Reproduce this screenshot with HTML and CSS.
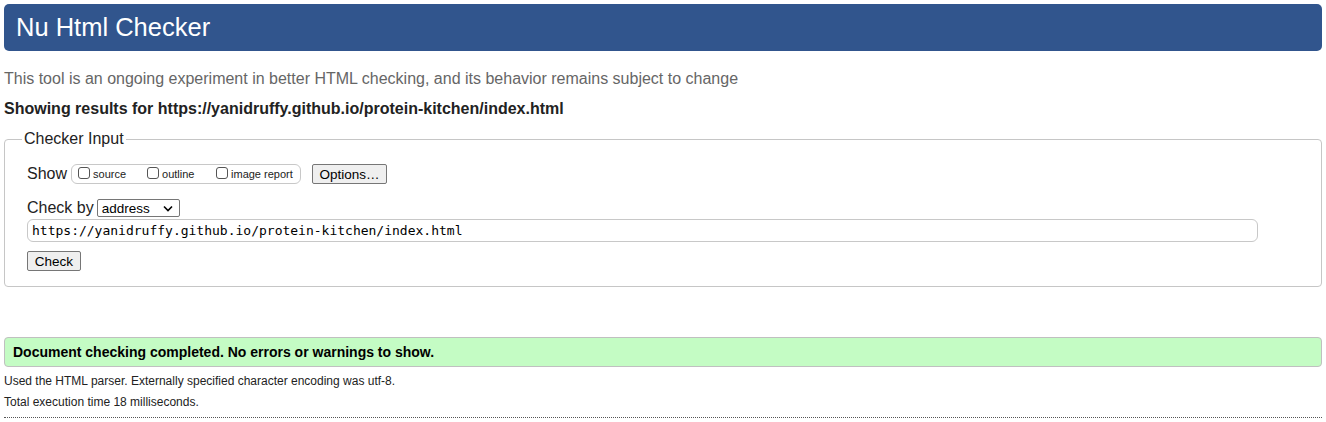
FILE: index.html
```html
<!DOCTYPE html>
<html>
<head>
<meta charset="utf-8">
<title>Nu Html Checker</title>
<link rel="stylesheet" href="styles.css">
</head>
<body>
<h1 class="title">Nu Html Checker</h1>
<p class="intro">This tool is an ongoing experiment in better HTML checking, and its behavior remains subject to change</p>
<p class="showing">Showing results for https://yanidruffy.github.io/protein-kitchen/index.html</p>
<fieldset class="inputs">
  <legend class="legend">Checker Input</legend>
  <div class="row show-row">
    <span class="lbl">Show</span>
    <span class="opts">
      <label class="opt opt-source"><span class="cb"></span>source</label>
      <label class="opt opt-outline"><span class="cb"></span>outline</label>
      <label class="opt"><span class="cb"></span>image report</label>
    </span>
    <span class="btn btn-options">Options…</span>
  </div>
  <div class="row by-row">
    <span class="lbl">Check by</span>
    <span class="select">address<svg class="chev" width="10" height="7" viewBox="0 0 10 7"><path d="M1 1.5 L5 5.5 L9 1.5" fill="none" stroke="#000" stroke-width="1.6"/></svg></span>
  </div>
  <div class="url">https://yanidruffy.github.io/protein-kitchen/index.html</div>
  <div class="row check-row"><span class="btn btn-check">Check</span></div>
</fieldset>
<div class="success">Document checking completed. No errors or warnings to show.</div>
<p class="meta meta-first">Used the HTML parser. Externally specified character encoding was utf-8.</p>
<p class="meta">Total execution time 18 milliseconds.</p>
<div class="rule"></div>
</body>
</html>
```
FILE: styles.css
```css
html, body {
  margin: 0;
  background: #fff;
}
body {
  padding: 4px;
  font-family: "Liberation Sans", Arial, sans-serif;
  color: #000;
}
.title {
  margin: 0;
  height: 47px;
  box-sizing: border-box;
  background: #31558d;
  color: #fff;
  border-radius: 5px;
  font-weight: normal;
  font-size: 25.5px;
  line-height: 47px;
  padding-left: 12px;
}
.intro {
  margin: 18px 0 0 0;
  font-size: 16px;
  line-height: 20px;
  color: #666;
}
.showing {
  margin: 10px 0 0 0;
  font-size: 16px;
  line-height: 20px;
  font-weight: bold;
  color: #222;
}
.inputs {
  margin: 11px 0 0 0;
  border: 1px solid #c6c6c6;
  border-radius: 4px;
  padding: 14px 22px 15px 22px;
  min-width: 0;
}
.legend {
  font-size: 16px;
  padding: 0 2px;
  margin-left: -5px;
  line-height: 18px;
  color: #222;
}
.row {
  display: flex;
  align-items: center;
}
.lbl {
  font-size: 16px;
  color: #222;
}
.show-row {
  height: 22px;
  margin-top: 1px;
}
.opts {
  display: flex;
  align-items: center;
  margin-left: 4px;
  height: 20px;
  box-sizing: border-box;
  border: 1px solid #c8c8c8;
  border-radius: 6px;
  padding: 0 6px 0 6px;
  width: 230px;
  font-size: 11px;
}
.opt {
  display: flex;
  align-items: center;
  color: #222;
}
.opt-source { width: 69px; }
.opt-outline { width: 69px; }
.cb {
  width: 12px;
  height: 12px;
  box-sizing: border-box;
  border: 1px solid #555;
  border-radius: 3px;
  margin-right: 3px;
  margin-top: -3px;
}
.btn {
  display: inline-flex;
  align-items: center;
  justify-content: center;
  box-sizing: border-box;
  border: 1px solid #767676;
  border-radius: 2px;
  background: #efefef;
  font-size: 13.5px;
  color: #000;
}
.btn-options {
  margin-left: 11px;
  width: 75px;
  height: 20px;
}
.by-row {
  margin-top: 13px;
  height: 20px;
}
.select {
  margin-left: 3px;
  width: 83px;
  height: 18px;
  box-sizing: border-box;
  border: 1px solid #767676;
  border-radius: 2px;
  font-size: 13.5px;
  display: flex;
  align-items: center;
  justify-content: space-between;
  padding: 0 6px 0 4px;
}
.url {
  margin-top: 1px;
  height: 23px;
  width: 1231px;
  box-sizing: border-box;
  border: 1px solid #c8c8c8;
  border-radius: 6px;
  font-family: "DejaVu Sans Mono", "Liberation Mono", monospace;
  font-size: 13px;
  line-height: 21px;
  padding-left: 4px;
  color: #000;
}
.check-row {
  margin-top: 9px;
}
.btn-check {
  width: 54px;
  height: 20px;
}
.success {
  margin-top: 50px;
  height: 30px;
  box-sizing: border-box;
  border: 1px solid #c0c0c0;
  border-radius: 4px;
  background: #c4fcc4;
  font-weight: bold;
  font-size: 14px;
  line-height: 28px;
  padding-left: 8px;
}
.meta {
  margin: 0;
  font-size: 12px;
  line-height: 21px;
  color: #222;
}
.meta-first {
  margin-top: 4px;
}
.rule {
  margin-top: 4px;
  border-top: 1px dotted #555;
}
```
